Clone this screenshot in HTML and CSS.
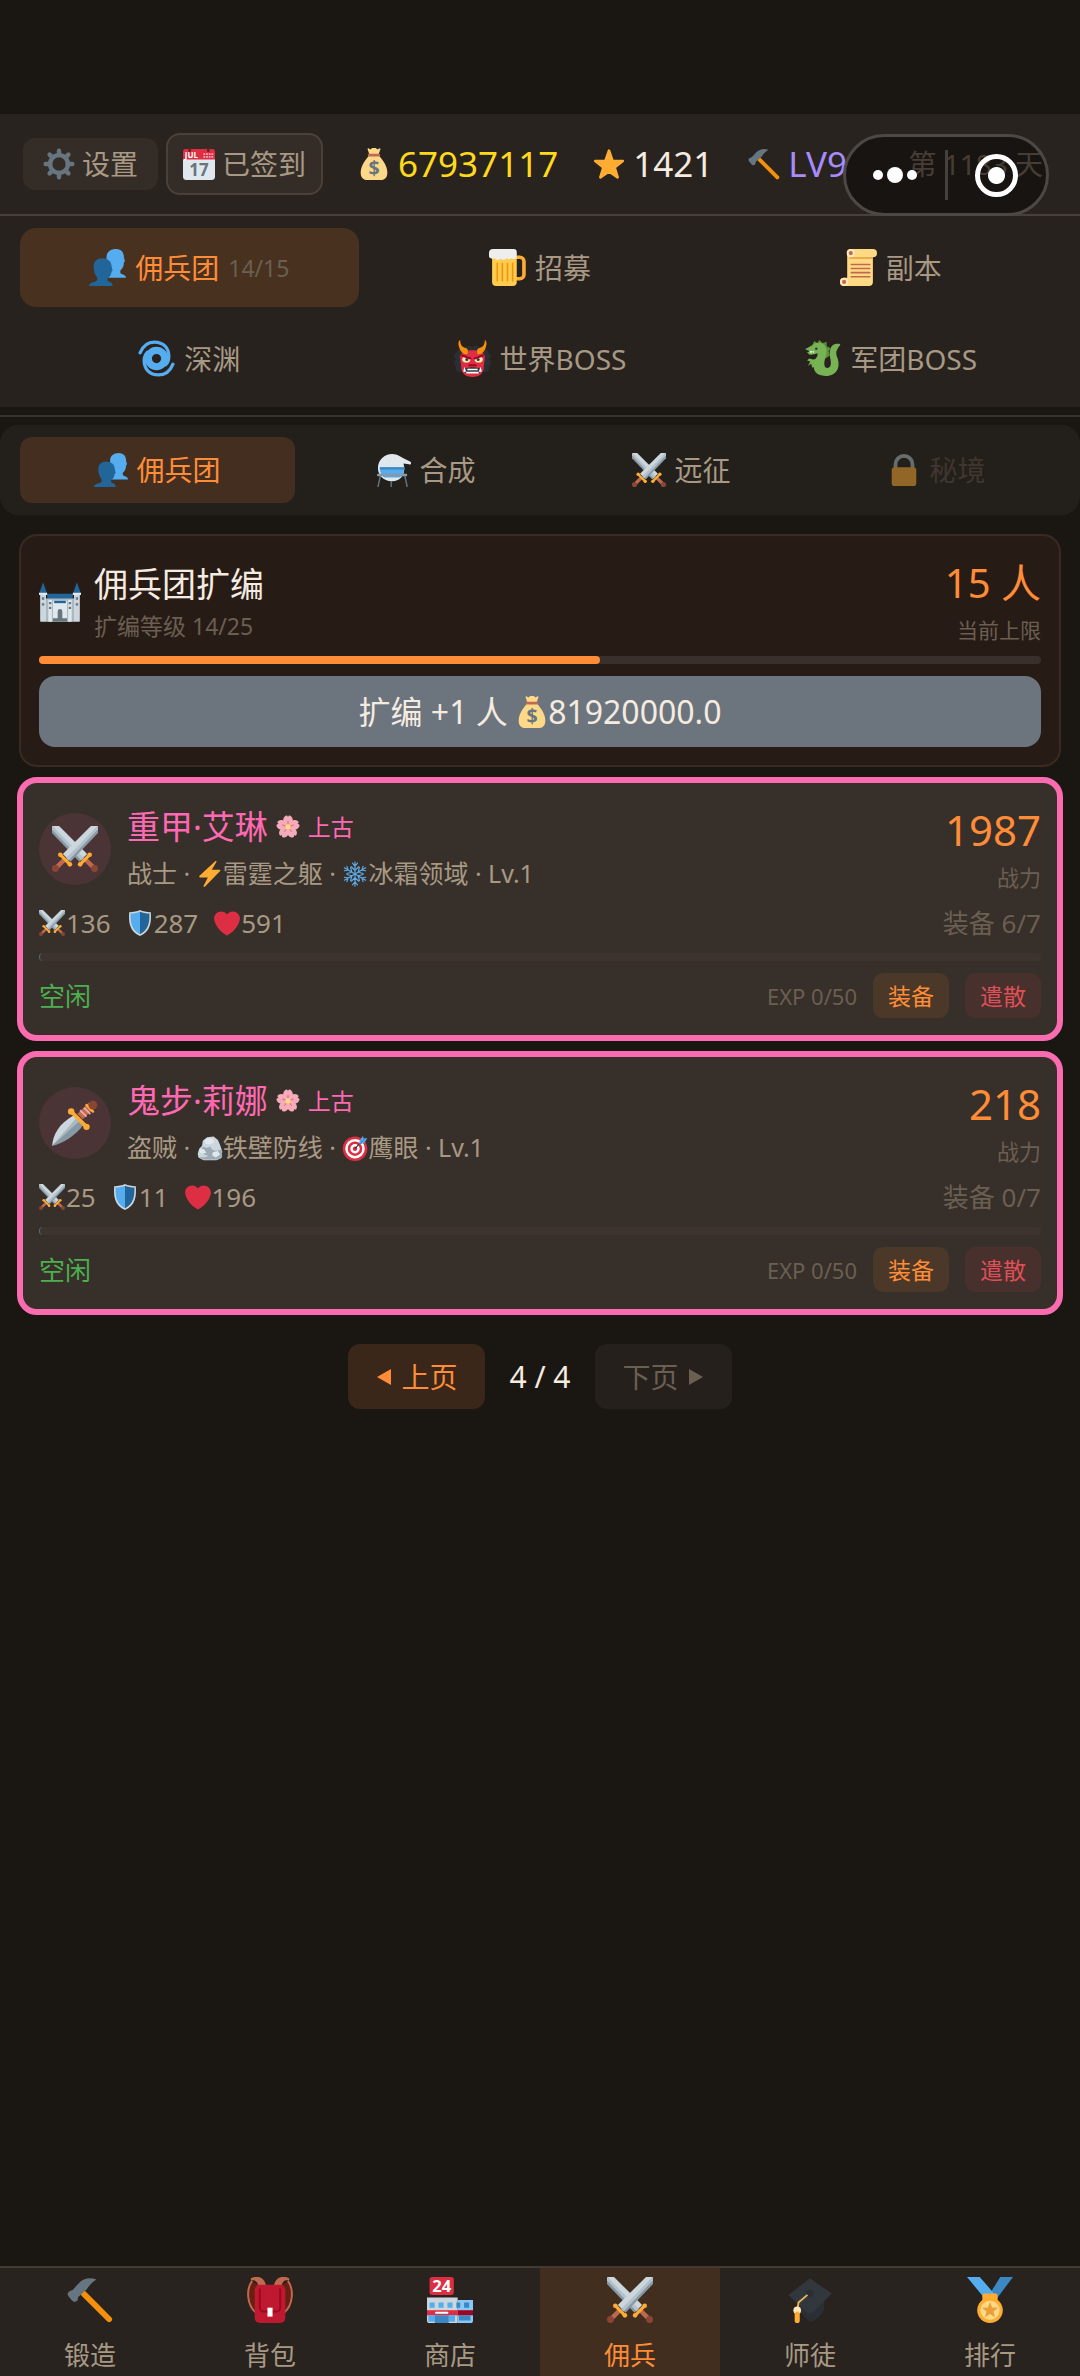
FILE: index.html
```html
<!DOCTYPE html>
<html lang="zh-CN">
<head>
  <meta charset="UTF-8">
  <meta name="viewport" content="width=device-width, initial-scale=1">
  <title>佣兵团</title>
  <link rel="stylesheet" href="styles.css">
</head>
<body>

<!-- icon sprite -->
<svg class="sprite" aria-hidden="true">
  <symbol id="i-gear" viewBox="0 0 36 36">
    <g stroke="#66757f" stroke-width="5" stroke-linecap="round">
      <path d="M18 3v5M18 28v5M3 18h5M28 18h5M7.4 7.4l3.5 3.5M25.1 25.1l3.5 3.5M7.4 28.6l3.5-3.5M25.1 10.9l3.5-3.5"/>
    </g>
    <circle cx="18" cy="18" r="10" fill="none" stroke="#66757f" stroke-width="5"/>
  </symbol>
  <symbol id="i-calendar" viewBox="0 0 36 36">
    <path fill="#e1e8ed" d="M0 12h36v20a4 4 0 0 1-4 4H4a4 4 0 0 1-4-4z"/>
    <path fill="#dd2e44" d="M3 1h30a3 3 0 0 1 3 3v9H0V4a3 3 0 0 1 3-3z"/>
    <path fill="#66241f" d="M6 0h3v3a1.500 1.500 0 0 1-3 0zM27 0h3v3a1.500 1.500 0 0 1-3 0z"/>
    <g fill="#f4abba"><path d="M23 6h2v2h-2zM26 6h2v2h-2zM29 6h2v2h-2zM32 6h2v2h-2zM23 9h2v2h-2zM26 9h2v2h-2zM29 9h2v2h-2zM32 9h2v2h-2z"/></g>
    <text x="2" y="11" class="cal-month">JUL</text>
    <text x="18" y="31" class="cal-day">17</text>
  </symbol>
  <symbol id="i-bag" viewBox="0 0 36 36">
    <path fill="#fdd888" d="M12 9h12c5 6 9 12 9 19 0 5-3 8-8 8H11c-5 0-8-3-8-8 0-7 4-13 9-19z"/>
    <path fill="#fdd888" d="M11 2c-1-2 1-2 2-1s2 0 3-1 3-1 4 0 2 2 3 1 3-1 2 1l-2 6H13z"/>
    <rect x="11" y="6.500" width="14" height="3" rx="1.500" fill="#bf6952"/>
    <text x="18" y="30" class="bag-sign">$</text>
  </symbol>
  <symbol id="i-star" viewBox="0 0 36 36">
    <path fill="#ffac33" stroke="#ffac33" stroke-width="3" stroke-linejoin="round" d="M18 3l4 11.500 11.500.2-9.200 7.100 3.400 11.200L18 26.300 8.300 33l3.400-11.200-9.200-7.100 11.500-.2z"/>
  </symbol>
  <symbol id="i-hammer" viewBox="0 0 36 36">
    <path stroke="#f4900c" stroke-width="4.500" stroke-linecap="round" d="M13 13l20 20"/>
    <path fill="#66757f" d="M23 2c-5-2-10-1-14 3L5 9.500c-.5 1-2.500 1-3.500 2L.5 13c-.6 1 4 6.500 5.500 6.500l2-1c1-1 0-3 1.500-3.500l6-5.500c2-3 4-5 7.500-7.500z"/>
  </symbol>
  <symbol id="i-people" viewBox="0 0 36 36">
    <path fill="#55acee" d="M17 8c0-5 4-8 9-8s8 3 8 8c0 1 1 3 1 4l-1 1c0 3-1 6-3.500 8v2c0 2 5.500 1 5.500 5H18z"/>
    <path fill="#226699" d="M4.500 17c0-5 3.500-8 8.500-8s9 3 9 8l1 4-1 1c-.5 3-1.500 5-4 7v1.500c0 1.500 5 1 5 5.500H0c0-4.500 8-3 8-6V28c-2.500-3-3.500-7-3.500-11z"/>
  </symbol>
  <symbol id="i-beer" viewBox="0 0 36 36">
    <path fill="none" stroke="#ffac33" stroke-width="3.500" d="M26 8h4a4 4 0 0 1 4 4v13a4 4 0 0 1-4 4h-4"/>
    <path fill="#ffcc4d" d="M3 8h24v24a4 4 0 0 1-4 4H7a4 4 0 0 1-4-4z"/>
    <path stroke="#f4900c" stroke-width="1.500" stroke-linecap="round" d="M8 14v17M13 14v17M18 14v17M23 14v17"/>
    <path fill="#eee" d="M4 0h20a3 3 0 0 1 3 3v5c0 2-4 2-5 1-1 1-4 1-5 0-1 2-5 2-6 0 0 2-5 2-5 0-3 1-6 0-6-2V4a4 4 0 0 1 4-4z"/>
  </symbol>
  <symbol id="i-scroll" viewBox="0 0 36 36">
    <path fill="#ffd983" d="M10 0h22a4 4 0 0 1 0 8v24a4 4 0 0 1-4 4H4a4 4 0 0 1 0-8h3V4a4 4 0 0 1 3-4z"/>
    <path fill="#e39f3d" d="M9 8h23v1.500H9z"/>
    <circle cx="10.500" cy="4" r="4" fill="#ffe8b6"/><circle cx="10.500" cy="4" r="2" fill="#c1694f"/>
    <circle cx="4" cy="32" r="4" fill="#ffe8b6"/><circle cx="4" cy="32" r="2" fill="#c1694f"/>
    <path stroke="#c1694f" stroke-width="1.500" stroke-linecap="round" d="M11 15h18M11 19h18M11 23h18M11 27h18"/>
  </symbol>
  <symbol id="i-cyclone" viewBox="0 0 36 36">
    <circle cx="18" cy="18" r="8" fill="none" stroke="#55acee" stroke-width="7"/>
    <path id="cyclone-arm" fill="none" stroke="#55acee" stroke-width="3.200" stroke-linecap="round" d="M2 12.500C5 5 10 2 16 2c9 0 14 6 14 14 0 3-1 6-3 8"/>
    <use href="#cyclone-arm" transform="rotate(180 18 18)"/>
  </symbol>
  <symbol id="i-ogre" viewBox="0 0 36 36">
    <path fill="#292f33" d="M3 12c0-3 4-4 6-2 1-4 6-6 9-3 3-3 8-1 9 3 2-2 6-1 6 2 3 1 4 5 1 7 3 2 2 6 0 7 1 4-2 6-5 5H7c-3 1-6-1-5-5-2-1-3-5 0-7-3-2-2-6 1-7z"/>
    <path fill="#dd2e44" d="M6 17c0-5 5-7 12-7s12 2 12 7c0 3-1 6-1 9 0 6-4 10-11 10S7 32 7 26c0-3-1-6-1-9z"/>
    <path fill="#f4900c" d="M6 0c0 5 2 7 6 8 2 1 2 4 1 6-4 0-7-3-8-7-1-3-1-6 1-7zM30 0c0 5-2 7-6 8-2 1-2 4-1 6 4 0 7-3 8-7 1-3 1-6-1-7z"/>
    <ellipse cx="12" cy="19" rx="4" ry="3" fill="#ffe8b6"/><ellipse cx="24" cy="19" rx="4" ry="3" fill="#ffe8b6"/>
    <circle cx="12.500" cy="19" r="1.500" fill="#31373d"/><circle cx="23.500" cy="19" r="1.500" fill="#31373d"/>
    <path fill="none" stroke="#a0041e" stroke-width="2" stroke-linecap="round" d="M8 15l8 3M28 15l-8 3M15 24.500h6"/>
    <path fill="#31373d" d="M10 28c5-2 11-2 16 0l-1 4H11z"/>
    <path fill="#fff" d="M10 26c1 2 1 3 2 5h-3zM26 26c-1 2-1 3-2 5h3zM13 28h10v1.500H13zM12 31h12v1.500H12z"/>
  </symbol>
  <symbol id="i-dragon" viewBox="0 0 36 36">
    <path fill="#5c913b" d="M8 5l2-4 3 2 2-3 3 3 4-1 0 4 4 2-2 3 1 4-4 3z"/>
    <path fill="#77b255" d="M1 9l7-4c5-4 13-3 14 5 0 6-3 10-2 15 1 3 5 3 6-1 1-5-3-10 0-16 1-4 6-5 9-4 1 1-1 2-2 4-2 3-2 5-1 8 4 9 1 19-11 19-10 0-13-6-11-14 1-3 4-5 3-8-3 1-6 2-8 1l-2-2 3-1z"/>
    <path fill="#77b255" d="M13 18l-4 1-4-1-2 2 3 1-2 4 3-2 1 4 4-2z"/>
    <circle cx="12" cy="8.500" r="1.200" fill="#31373d"/>
    <path fill="#fff" d="M5 11l2 2 1-2 1 2 1-2z"/>
  </symbol>
  <symbol id="i-alembic" viewBox="0 0 36 36">
    <path stroke="#66757f" stroke-width="1.500" d="M4 22L1 36M29 22l3 14M15 30v6"/>
    <path fill="#e1e8ed" d="M16 1c6 0 9 3 13 5l6 3c2 1 1 4-1 3l-6-1c3 10-2 19-12 19S1 23 1 16C1 7 8 1 16 1z"/>
    <path fill="#55acee" d="M3 15h26c0 6-3 10-5 11H8c-3-2-5-5-5-11z"/>
    <path fill="#3b88c3" d="M3 15h26v2.500H3z"/>
    <rect y="22" width="32" height="2.500" rx="1" fill="#8899a6"/>
  </symbol>
  <symbol id="i-sword-one" viewBox="0 0 36 36">
    <path fill="#8899a6" d="M36 0v5.500L14.500 28 9 22.500z"/>
    <path fill="#ccd6dd" d="M36 0h-5.500L8.500 22l3.500 3z"/>
    <path fill="#b4c1ca" d="M36 0v2.500L13 27l-2-2z"/>
    <path stroke="#c1694f" stroke-width="3.500" d="M4 32l6-6"/>
    <circle cx="2.700" cy="33.300" r="2.700" fill="#8a4633"/>
    <path stroke="#ffac33" stroke-width="2.500" stroke-linecap="round" d="M7 23l7 7"/>
    <circle cx="6.500" cy="22.500" r="1.800" fill="#ffac33"/><circle cx="14" cy="30" r="1.800" fill="#ffac33"/>
  </symbol>
  <symbol id="i-swords" viewBox="0 0 36 36">
    <g transform="translate(36 0) scale(-1 1)"><use href="#i-sword-one" width="36" height="36"/></g>
    <use href="#i-sword-one" width="36" height="36"/>
  </symbol>
  <symbol id="i-lock" viewBox="0 0 36 36">
    <path fill="none" stroke="#aab8c2" stroke-width="4" d="M9 18v-6a9 9 0 0 1 18 0v6"/>
    <rect x="5" y="15" width="26" height="20" rx="3" fill="#ffac33"/>
  </symbol>
  <symbol id="i-castle" viewBox="0 0 36 36">
    <path fill="#226699" d="M0 11L3.500 1 7 11zM29 11l3.500-10L36 11zM7 11h22v6H7z"/>
    <path fill="#ccd6dd" d="M1 12h5v23H2a1 1 0 0 1-1-1zM30 12h5v22a1 1 0 0 1-1 1h-4z"/>
    <path fill="#aab8c2" d="M6 15h24v20H6z"/>
    <path fill="#e1e8ed" d="M0 10h7v2H0zM29 10h7v2h-7zM12 17h12v18H12zM8 16h3v19H8zM25 16h3v19h-3z"/>
    <path fill="#226699" d="M13 17h10v2H13z"/>
    <path fill="#66757f" d="M2.500 14h2v2h-2zM2.500 19h2v2h-2zM31.500 14h2v2h-2zM31.500 19h2v2h-2zM8.500 18h2v2h-2zM8.500 22h2v2h-2zM25.500 18h2v2h-2zM25.500 22h2v2h-2zM16 26a2 2 0 0 1 4 0v6h-4zM12 32h12v3H12z"/>
  </symbol>
  <symbol id="i-flower" viewBox="0 0 36 36">
    <path id="petal" fill="#f4abba" d="M18 19c-5-3-8-8-7-13 1-4 4-6 6-5l1 2 1-2c2-1 5 1 6 5 1 5-2 10-7 13z"/>
    <use href="#petal" transform="rotate(72 18 18)"/><use href="#petal" transform="rotate(144 18 18)"/>
    <use href="#petal" transform="rotate(216 18 18)"/><use href="#petal" transform="rotate(288 18 18)"/>
    <path stroke="#ea596e" stroke-width="1.500" d="M18 18V9M18 18l8.500-3M18 18l5.500 7M18 18l-5.500 7M18 18l-8.500-3"/>
    <circle cx="18" cy="18" r="4" fill="#ffd983"/>
  </symbol>
  <symbol id="i-bolt" viewBox="0 0 36 36">
    <path fill="#ffac33" d="M32 12.500c-.3-.5-1-.5-1.500-.5H20.500L27 1c.5-1-1-1.500-1.800-.8L3.500 20.500c-1 1 0 2.500 1.500 2.500h10L9 34.500c-.5 1 1 1.800 1.900 1L32 14c.3-.4.4-1 0-1.500z"/>
  </symbol>
  <symbol id="i-snow" viewBox="0 0 36 36">
    <g id="flake-arm" fill="none" stroke="#5dadec" stroke-width="1.600" stroke-linecap="round"><path d="M18 18V1M14.500 3l3.500 4 3.500-4M13 8l5 5 5-5"/></g>
    <use href="#flake-arm" transform="rotate(60 18 18)"/><use href="#flake-arm" transform="rotate(120 18 18)"/>
    <use href="#flake-arm" transform="rotate(180 18 18)"/><use href="#flake-arm" transform="rotate(240 18 18)"/>
    <use href="#flake-arm" transform="rotate(300 18 18)"/>
  </symbol>
  <symbol id="i-shield" viewBox="0 0 36 36">
    <path fill="#ccd6dd" d="M18 0c4 2 9 3 15 3 1 15-1 27-15 33C4 30 2 18 3 3c6 0 11-1 15-3z"/>
    <path fill="#55acee" d="M18 2.500v31C6.500 28 4.500 18 5 5c5 0 9-1 13-2.500z"/>
    <path fill="#226699" d="M18 2.500v31C29.500 28 31.500 18 31 5c-5 0-9-1-13-2.500z"/>
  </symbol>
  <symbol id="i-heart" viewBox="0 0 36 36">
    <path fill="#dd2e44" d="M35.900 11.800c0-5.400-4.400-9.800-9.900-9.800-3.300 0-6.200 1.600-8 4.100C16.200 3.600 13.300 2 9.900 2 4.500 2 .1 6.400.1 11.800c0 .8.100 1.500.3 2.200C1.900 23.400 12.300 33.200 18 35.300c5.700-2.100 16.100-11.900 17.600-21.300.2-.7.300-1.400.3-2.200z"/>
  </symbol>
  <symbol id="i-dagger" viewBox="0 0 36 36">
    <path fill="#ccd6dd" d="M0 36c1-9 5-17 17-24l4 4z"/>
    <path fill="#8899a6" d="M0 36c9-2 18-8 25-17l-4-4z"/>
    <path fill="#aab8c2" d="M0 36L20 13l2 3z"/>
    <path stroke="#c1694f" stroke-width="6" d="M22 13l9-9"/>
    <path stroke="#e6aaaa" stroke-width="1.500" d="M22 8l5 5M25 6l5 5"/>
    <path stroke="#ffac33" stroke-width="3" stroke-linecap="round" d="M15 9l12 12"/>
    <path stroke="#ffac33" stroke-width="2" stroke-linecap="round" d="M27 4l5 5"/>
    <circle cx="15" cy="9" r="2.500" fill="#ffac33"/><circle cx="27" cy="21" r="2.500" fill="#ffac33"/>
    <circle cx="32" cy="4" r="3.500" fill="#8a4633"/>
  </symbol>
  <symbol id="i-rock" viewBox="0 0 36 36">
    <path fill="#ccd6dd" d="M3 19l4-4 1-7 6-5 9-1 6 5 3 7 3 9-1 9-7 3H9l-7-4-1-5z"/>
    <path fill="#9dabb6" d="M8 16l6 2 4-2 3 4 5 2 8-2 1 10-7 4H9l-6-4 7 1 6-2-6-2-5-4z"/>
    <path fill="#e1e8ed" d="M10 8l5-4 7 2 2 4-6 3-6-1zM5 19l5 1 3 5-6 1-4-3zM22 24l7-2 3 5-6 4-5-3z"/>
  </symbol>
  <symbol id="i-target" viewBox="0 0 36 36">
    <circle cx="18" cy="19" r="17" fill="#dd2e44"/><circle cx="18" cy="19" r="13.500" fill="#fff"/>
    <circle cx="18" cy="19" r="10" fill="#dd2e44"/><circle cx="18" cy="19" r="6.500" fill="#fff"/><circle cx="18" cy="19" r="3" fill="#dd2e44"/>
    <path stroke="#292f33" stroke-width="1.500" d="M18 19L27 9"/>
    <path fill="#55acee" d="M24 9l5-8 1 4 5-1-4 7-7 2z"/>
    <path stroke="#226699" d="M24 13l7-7"/>
  </symbol>
  <symbol id="i-backpack" viewBox="0 0 36 36">
    <path fill="#662113" d="M4 4C-1 9-1 20 6 28h24c7-8 7-19 2-24l-5 2H9z"/>
    <path fill="none" stroke="#c1694f" stroke-width="1.500" d="M7 28C0 22-1 10 4 3M29 28c7-6 8-18 3-25"/>
    <path fill="#c1694f" d="M3 1c6-3 11 0 12 6H9C8 3 6 2 3 3zM33 1c-6-3-11 0-12 6h6c1-4 3-5 6-4z"/>
    <rect x="6" y="6" width="24" height="30" rx="4" fill="#be1931"/>
    <path fill="none" stroke="#a0041e" stroke-width="1.500" d="M10 9v15a3 3 0 0 0 3 3h10a3 3 0 0 0 3-3V9"/>
    <rect x="16" y="24" width="4" height="7" fill="#fff"/>
  </symbol>
  <symbol id="i-store" viewBox="0 0 36 36">
    <rect x="2" width="19" height="14" rx="2" fill="#dd2e44"/>
    <text x="11.500" y="11.500" class="store-sign">24</text>
    <path fill="#ccd6dd" d="M0 16h24v20H2a2 2 0 0 1-2-2z"/>
    <path fill="#88c9f9" d="M24 18h12v16a2 2 0 0 1-2 2H24z"/>
    <path fill="#a0041e" d="M24 26h12v4H24z"/><path fill="#dd2e44" d="M0 26h24v4H0z"/>
    <path fill="#55acee" d="M2 20h4v4H2zM9 20h4v4H9zM16 20h4v4h-4zM1 30h5v5H1zM17 30h5v5h-5z"/>
    <path fill="#3b88c3" d="M23 20h3v4h-3zM29 20h4v4h-4zM6 30h11v6H6zM25 30h9v4h-9z"/>
    <path stroke="#fff" stroke-width="1.500" stroke-linecap="round" d="M7 28h9"/>
  </symbol>
  <symbol id="i-cap" viewBox="0 0 36 36">
    <path fill="#292f33" d="M8 20v7c4 0 8 8 10 8 4 0 10-6 11-10v-8z"/>
    <path fill="#31373d" d="M18 1l17 12-14 14c-2 2-4 2-6 0L1 14z"/>
    <circle cx="18" cy="13" r="3" fill="#292f33"/>
    <path fill="none" stroke="#e8b45a" stroke-width="1.500" d="M16 14l-7 6-1 7"/>
    <circle cx="8" cy="26" r="3" fill="#ffe8b6"/>
    <path stroke="#ffac33" stroke-width="4" stroke-linecap="round" d="M8 29v5"/>
  </symbol>
  <symbol id="i-medal" viewBox="0 0 36 36">
    <path fill="#3b88c3" d="M26 0h10L24 16h-8z"/>
    <path fill="#55acee" d="M0 0h10l13 15-9 2z"/>
    <rect x="12" y="13" width="12" height="6" rx="2" fill="#ffac33"/>
    <circle cx="18" cy="26" r="10" fill="#ffac33"/><circle cx="18" cy="26" r="7.500" fill="#ffd983"/>
    <path fill="#e9a03b" d="M18 19.500l1.700 4.400 4.600.2-3.600 2.900 1.200 4.500-3.900-2.500-3.900 2.500 1.200-4.500-3.600-2.900 4.600-.2z"/>
  </symbol>
</svg>

<header class="topbar">
  <button type="button" class="btn-set"><svg class="ic ic-m"><use href="#i-gear"/></svg>设置</button>
  <button type="button" class="btn-sign"><svg class="ic ic-m"><use href="#i-calendar"/></svg>已签到</button>
  <div class="stat gold"><svg class="ic ic-m"><use href="#i-bag"/></svg>67937117</div>
  <div class="stat"><svg class="ic ic-m"><use href="#i-star"/></svg>1421</div>
  <div class="stat level"><svg class="ic ic-m"><use href="#i-hammer"/></svg>LV9</div>
  <div class="day">第 1183 天</div>
  <!-- mini program capsule -->
  <div class="capsule">
    <button type="button" class="cap-btn" aria-label="更多"><span class="dot"></span><span class="dot big"></span><span class="dot"></span></button>
    <span class="cap-line"></span>
    <button type="button" class="cap-btn" aria-label="关闭"><span class="ring"></span></button>
  </div>
</header>

<nav class="tabs">
  <button type="button" class="tab active"><svg class="ic ic-l"><use href="#i-people"/></svg>佣兵团<small>14/15</small></button>
  <button type="button" class="tab"><svg class="ic ic-l"><use href="#i-beer"/></svg>招募</button>
  <button type="button" class="tab"><svg class="ic ic-l"><use href="#i-scroll"/></svg>副本</button>
  <button type="button" class="tab"><svg class="ic ic-l"><use href="#i-cyclone"/></svg>深渊</button>
  <button type="button" class="tab"><svg class="ic ic-l"><use href="#i-ogre"/></svg>世界BOSS</button>
  <button type="button" class="tab"><svg class="ic ic-l"><use href="#i-dragon"/></svg>军团BOSS</button>
</nav>

<main class="content">
  <div class="subtabs">
    <button type="button" class="subtab active"><svg class="ic ic-s"><use href="#i-people"/></svg>佣兵团</button>
    <button type="button" class="subtab"><svg class="ic ic-s"><use href="#i-alembic"/></svg>合成</button>
    <button type="button" class="subtab"><svg class="ic ic-s"><use href="#i-swords"/></svg>远征</button>
    <button type="button" class="subtab locked" disabled><svg class="ic ic-s"><use href="#i-lock"/></svg>秘境</button>
  </div>

  <section class="expand">
    <div class="head">
      <svg class="castle"><use href="#i-castle"/></svg>
      <div class="info">
        <h2 class="title">佣兵团扩编</h2>
        <p class="sub">扩编等级 14/25</p>
      </div>
      <div class="power">
        <strong class="cap-num">15 人</strong>
        <span class="cap-label">当前上限</span>
      </div>
    </div>
    <div class="bar"><div class="bar-fill" style="width: 56%"></div></div>
    <button type="button" class="btn-expand">扩编 +1 人&nbsp;<svg class="ic ic-m"><use href="#i-bag"/></svg>81920000.0</button>
  </section>

  <article class="hero">
    <div class="head">
      <div class="avatar"><svg class="ic ic-xl"><use href="#i-swords"/></svg></div>
      <div class="info">
        <h2 class="name">重甲·艾琳<svg class="ic ic-xs"><use href="#i-flower"/></svg><small>上古</small></h2>
        <p class="desc">战士 · <svg class="ic ic-t"><use href="#i-bolt"/></svg>雷霆之躯 · <svg class="ic ic-t"><use href="#i-snow"/></svg>冰霜领域 · Lv.1</p>
      </div>
      <div class="power"><strong>1987</strong><span>战力</span></div>
    </div>
    <div class="attrs">
      <span><svg class="ic ic-t"><use href="#i-swords"/></svg>136</span>
      <span><svg class="ic ic-t"><use href="#i-shield"/></svg>287</span>
      <span><svg class="ic ic-t"><use href="#i-heart"/></svg>591</span>
      <span class="equip-count">装备 6/7</span>
    </div>
    <div class="bar exp"><div class="bar-fill" style="width: 0%"></div></div>
    <div class="foot">
      <span class="state">空闲</span>
      <span class="exp-text">EXP 0/50</span>
      <button type="button" class="btn-mini equip">装备</button>
      <button type="button" class="btn-mini dismiss">遣散</button>
    </div>
  </article>

  <article class="hero">
    <div class="head">
      <div class="avatar"><svg class="ic ic-xl"><use href="#i-dagger"/></svg></div>
      <div class="info">
        <h2 class="name">鬼步·莉娜<svg class="ic ic-xs"><use href="#i-flower"/></svg><small>上古</small></h2>
        <p class="desc">盗贼 · <svg class="ic ic-t"><use href="#i-rock"/></svg>铁壁防线 · <svg class="ic ic-t"><use href="#i-target"/></svg>鹰眼 · Lv.1</p>
      </div>
      <div class="power"><strong>218</strong><span>战力</span></div>
    </div>
    <div class="attrs">
      <span><svg class="ic ic-t"><use href="#i-swords"/></svg>25</span>
      <span><svg class="ic ic-t"><use href="#i-shield"/></svg>11</span>
      <span><svg class="ic ic-t"><use href="#i-heart"/></svg>196</span>
      <span class="equip-count">装备 0/7</span>
    </div>
    <div class="bar exp"><div class="bar-fill" style="width: 0%"></div></div>
    <div class="foot">
      <span class="state">空闲</span>
      <span class="exp-text">EXP 0/50</span>
      <button type="button" class="btn-mini equip">装备</button>
      <button type="button" class="btn-mini dismiss">遣散</button>
    </div>
  </article>

  <div class="pager">
    <button type="button" class="btn-page"><svg class="arrow" viewBox="0 0 16 18"><path d="M1 9L15 1v16z"/></svg>上页</button>
    <span class="page-no">4 / 4</span>
    <button type="button" class="btn-page" disabled>下页<svg class="arrow" viewBox="0 0 16 18"><path d="M15 9L1 1v16z"/></svg></button>
  </div>
</main>

<nav class="bottom-nav">
  <a href="#forge"><svg class="ic ic-xl"><use href="#i-hammer"/></svg>锻造</a>
  <a href="#bag"><svg class="ic ic-xl"><use href="#i-backpack"/></svg>背包</a>
  <a href="#shop"><svg class="ic ic-xl"><use href="#i-store"/></svg>商店</a>
  <a href="#merc" class="active"><svg class="ic ic-xl"><use href="#i-swords"/></svg>佣兵</a>
  <a href="#mentor"><svg class="ic ic-xl"><use href="#i-cap"/></svg>师徒</a>
  <a href="#rank"><svg class="ic ic-xl"><use href="#i-medal"/></svg>排行</a>
</nav>

</body>
</html>
```

FILE: styles.css
```css
* {
  box-sizing: border-box;
}
body {
  margin: 0;
  padding-top: 114px;
  min-height: 100vh;
  display: flex;
  flex-direction: column;
  background: #1a1612;
  color: #f5ebe0;
  font-family: "Noto Sans", "Noto Sans CJK SC", sans-serif;
  font-size: 28px;
  line-height: 36px;
}
button {
  display: flex;
  align-items: center;
  justify-content: center;
  margin: 0;
  padding: 0;
  border: none;
  background: none;
  color: #a89984;
  font: inherit;
  white-space: nowrap;
  cursor: pointer;
}
h2, p {
  margin: 0;
  font-weight: normal;
}
strong {
  font-weight: normal;
}

/* icons */
.sprite {
  display: none;
}
.ic {
  flex: none;
}
.ic-xs { width: 24px; height: 24px; }
.ic-t { width: 26px; height: 26px; }
.ic-m { width: 32px; height: 32px; }
.ic-s { width: 34px; height: 34px; }
.ic-l { width: 37px; height: 37px; }
.ic-xl { width: 46px; height: 46px; }
.cal-month {
  font-size: 9px;
  font-weight: bold;
  fill: #fff;
}
.cal-day {
  font-size: 19px;
  font-weight: bold;
  text-anchor: middle;
  fill: #66757f;
}
.bag-sign {
  font-size: 22px;
  font-weight: bold;
  text-anchor: middle;
  fill: #67757f;
}
.store-sign {
  font-size: 13px;
  font-weight: bold;
  text-anchor: middle;
  fill: #fff;
}

/* top bar */
.topbar {
  position: relative;
  display: flex;
  align-items: center;
  height: 102px;
  padding: 0 37px 0 23px;
  background: #28231f;
  border-bottom: 2px solid #4a403a;
  white-space: nowrap;
}
.btn-set {
  gap: 7px;
  height: 52px;
  padding: 0 20px;
  border-radius: 12px;
  background: #332c27;
}
.btn-sign {
  gap: 7px;
  height: 62px;
  margin-left: 8px;
  padding: 0 15px;
  border: 2px solid #4a4038;
  border-radius: 14px;
  background: #342d27;
}
.stat {
  display: flex;
  align-items: center;
  gap: 8px;
  margin-left: 35px;
  font-size: 35px;
}
.gold {
  color: #ffd91a;
}
.level {
  color: #a78bfa;
}
.day {
  margin-left: auto;
  color: #857566;
  font-size: 28px;
}
.capsule {
  position: absolute;
  top: 20px;
  right: 31px;
  display: flex;
  align-items: center;
  width: 206px;
  height: 82px;
  border: 3px solid #4d4844;
  border-radius: 41px;
  background: rgba(8, 5, 3, 0.5);
}
.cap-btn {
  flex: 1;
  gap: 4px;
  height: 100%;
}
.cap-line {
  width: 3px;
  height: 50px;
  background: #46413d;
}
.dot {
  width: 10px;
  height: 10px;
  border-radius: 50%;
  background: #fff;
}
.dot.big {
  width: 16px;
  height: 16px;
}
.ring {
  width: 43px;
  height: 43px;
  border: 5px solid #fff;
  border-radius: 50%;
  background: radial-gradient(circle, #fff 8px, transparent 9px);
}

/* main tabs */
.tabs {
  display: grid;
  grid-template-columns: repeat(3, 1fr);
  gap: 12px;
  padding: 12px 20px 9px;
  background: #27221e;
}
.tab {
  gap: 9px;
  height: 79px;
  border-radius: 16px;
}
.tab small {
  color: #6b5f52;
  font-size: 23px;
}
.tab.active {
  background: #48311f;
  color: #ff8c37;
}

/* content */
.content {
  flex: 1;
  margin-top: 8px;
  border-top: 2px solid #38312d;
}
.subtabs {
  display: flex;
  gap: 8px;
  margin-top: 8px;
  padding: 12px 20px;
  border-radius: 18px;
  background: #231f1b;
}
.subtab {
  flex: 1 1 auto;
  gap: 8px;
  height: 66px;
  border-radius: 12px;
}
.subtab.active {
  background: #442e1f;
  color: #ff8c37;
}
.subtab.locked {
  color: #40362f;
}
.locked .ic {
  opacity: 0.5;
}

.expand {
  margin: 19px 19px 0;
  padding: 24px 18px 18px;
  border: 2px solid #3a2a21;
  border-radius: 18px;
  background: #271b16;
}
.head {
  display: flex;
  align-items: center;
  gap: 16px;
}
.expand .head {
  gap: 13px;
}
.castle {
  width: 42px;
  height: 42px;
}
.title {
  font-size: 34px;
  line-height: 42px;
}
.sub {
  margin-top: 6px;
  color: #6b5f52;
  font-size: 23px;
  line-height: 30px;
}
.power {
  display: flex;
  flex-direction: column;
  align-items: flex-end;
  gap: 10px;
  margin-left: auto;
  color: #6b5f52;
  font-size: 22px;
  line-height: 28px;
}
.power strong {
  color: #ff8c37;
  font-size: 42px;
  line-height: 46px;
}
.power .cap-num {
  font-size: 40px;
}
.power .cap-label {
  font-size: 21px;
}
.bar {
  height: 8px;
  margin-top: 12px;
  border-radius: 4px;
  background: #3a302b;
}
.bar-fill {
  height: 100%;
  border-radius: 4px;
  background: #ff8c37;
}
.btn-expand {
  width: 100%;
  height: 71px;
  margin-top: 12px;
  border-radius: 16px;
  background: #6c757d;
  color: #f5ebe0;
  font-size: 32px;
}

/* mercenary card */
.hero {
  margin: 10px 17px 0;
  padding: 24px 16px 17px;
  border: 6px solid #fa6bb0;
  border-radius: 20px;
  background: #372f29;
}
.avatar {
  display: flex;
  align-items: center;
  justify-content: center;
  width: 72px;
  height: 72px;
  border-radius: 50%;
  background: #4b3436;
}
.name {
  display: flex;
  align-items: center;
  gap: 8px;
  color: #ff69b4;
  font-size: 33px;
  line-height: 40px;
}
.name small {
  font-size: 23px;
}
.desc {
  margin-top: 8px;
  color: #a89984;
  font-size: 25px;
}
.desc .ic {
  vertical-align: -4px;
}
.attrs {
  display: flex;
  gap: 16px;
  margin-top: 14px;
  color: #a89984;
  font-size: 26px;
}
.attrs span {
  display: flex;
  align-items: center;
  gap: 1px;
}
.attrs .equip-count {
  margin-left: auto;
  color: #6b5f52;
}
.bar.exp {
  background: #3d332f;
  border-left: 1px solid #4f7080;
}
.foot {
  display: flex;
  align-items: center;
  gap: 16px;
  margin-top: 12px;
}
.state {
  color: #4caf50;
  font-size: 26px;
}
.exp-text {
  margin-left: auto;
  color: #6b5f52;
  font-size: 22px;
}
.btn-mini {
  height: 45px;
  padding: 0 15px;
  border-radius: 10px;
  font-size: 23px;
}
.equip {
  background: #4b3828;
  color: #ff8c37;
}
.dismiss {
  background: #48302c;
  color: #df4f57;
}

/* pager */
.pager {
  display: flex;
  align-items: center;
  justify-content: center;
  gap: 24px;
  margin-top: 29px;
  font-size: 30px;
}
.btn-page {
  gap: 9px;
  height: 65px;
  padding: 0 28px;
  border-radius: 12px;
  background: #3a271a;
  color: #ff8c37;
  font-size: 28px;
}
.btn-page:disabled {
  background: #26201d;
  color: #6b5f52;
}
.arrow {
  width: 16px;
  height: 18px;
  fill: currentColor;
}

/* bottom nav */
.bottom-nav {
  display: grid;
  grid-template-columns: repeat(6, 1fr);
  border-top: 2px solid #433a34;
  background: #28231f;
}
.bottom-nav a {
  display: flex;
  flex-direction: column;
  align-items: center;
  gap: 14px;
  padding: 9px 0 3px;
  color: #a89984;
  font-size: 26px;
  text-decoration: none;
}
.bottom-nav .active {
  background: #412e1f;
  color: #ff8c37;
}
```
